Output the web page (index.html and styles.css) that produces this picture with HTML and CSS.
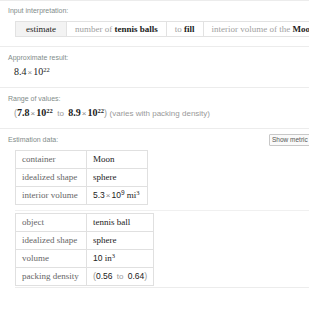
FILE: index.html
```html
<!DOCTYPE html>
<html lang="en">
<head>
  <meta charset="UTF-8" />
  <title>Estimate - tennis balls to fill the Moon</title>
  <link rel="stylesheet" href="styles.css">
</head>
<body>

<div class="pod pod-input">
  <div class="pod-title">Input interpretation:</div>
  <div class="interp">
    <span class="cell cell-head">estimate</span>
    <span class="cell">number of <b>tennis balls</b></span>
    <span class="cell">to <b>fill</b></span>
    <span class="cell">interior volume of the <b>Moon</b></span>
  </div>
</div>

<div class="pod pod-result">
  <div class="pod-title">Approximate result:</div>
  <div class="value">8.4<span class="times">&times;</span>10<sup>22</sup></div>
</div>

<div class="pod pod-range">
  <div class="pod-title">Range of values:</div>
  <div class="value">
    <span class="paren">(</span><b>7.8</b><span class="times">&times;</span><b>10<sup>22</sup></b>
    <span class="word">to</span>
    <b>8.9</b><span class="times">&times;</span><b>10<sup>22</sup></b><span class="paren">)</span>
    <span class="note">(varies with packing density)</span>
  </div>
</div>

<div class="pod pod-data">
  <div class="title-row">
    <div class="pod-title">Estimation data:</div>
    <button class="metric">Show metric</button>
  </div>

  <div class="subpod">
    <table class="data data-moon">
      <tr><td>container</td><td>Moon</td></tr>
      <tr><td>idealized shape</td><td>sphere</td></tr>
      <tr><td>interior volume</td><td><span class="num">5.3</span><span class="times">&times;</span><span class="num">10<sup>9</sup></span> mi<sup>3</sup></td></tr>
    </table>
  </div>

  <div class="subpod subpod-last">
    <table class="data data-ball">
      <tr><td>object</td><td>tennis ball</td></tr>
      <tr><td>idealized shape</td><td>sphere</td></tr>
      <tr><td>volume</td><td><span class="num">10</span> in<sup>3</sup></td></tr>
      <tr><td>packing density</td><td><span class="paren">(</span><span class="num">0.56</span> <span class="word">to</span> <span class="num">0.64</span><span class="paren">)</span></td></tr>
    </table>
  </div>
</div>

</body>
</html>
```

FILE: styles.css
```css
body {
  margin: 0;
  background: #fff;
  color: #222;
  font-family: 'Liberation Serif', 'DejaVu Serif', serif;
  width: 309px;
  height: 309px;
  overflow: hidden;
}

.pod {
  border-top: 1px solid #ececec;
  padding: 5px 0 0 8px;
}

.pod-title {
  font-family: 'Liberation Sans', Arial, sans-serif;
  font-size: 7px;
  line-height: 9px;
  color: #7f8c8a;
}

/* input interpretation */
.pod-input {
  height: 40px;
  overflow: hidden;
}

.interp {
  display: flex;
  margin: 6px 0 0 7px;
  white-space: nowrap;
  border-top: 1px solid #e2e2e2;
  border-bottom: 1px solid #e2e2e2;
  height: 14px;
  width: 330px;
}

.cell {
  font-size: 9px;
  line-height: 14px;
  padding: 0 8px;
  color: #a0a0a0;
  border-left: 1px solid #e2e2e2;
}

.cell b {
  color: #222;
}

.cell-head {
  background: #f3f3f3;
  color: #222;
  padding: 0 10px;
}

/* results */
.pod-result {
  height: 34px;
  padding-top: 6px;
}

.pod-range {
  height: 34px;
  padding-top: 6px;
}

.value {
  margin: 4px 0 0 6px;
  font-size: 10px;
  line-height: 12px;
  white-space: nowrap;
}

.value sup,
.data sup {
  font-size: 6.5px;
  line-height: 0;
  vertical-align: 3px;
}

.times {
  color: #888;
  font-family: 'Liberation Sans', Arial, sans-serif;
  font-size: 8px;
  margin: 0 1px;
}

.paren {
  color: #999;
  font-family: 'Liberation Sans', Arial, sans-serif;
  font-size: 9px;
}

.word {
  color: #999;
  font-family: 'Liberation Sans', Arial, sans-serif;
  font-size: 8px;
  margin: 0 2px;
}

.note {
  color: #999;
  font-family: 'Liberation Sans', Arial, sans-serif;
  font-size: 8px;
}

/* estimation data */
.pod-data {
  padding-top: 6px;
}

.title-row {
  display: flex;
  justify-content: space-between;
  align-items: flex-start;
}

.metric {
  font-family: 'Liberation Sans', Arial, sans-serif;
  font-size: 6.5px;
  color: #555;
  background: #fafafa;
  border: 1px solid #c8c8c8;
  border-radius: 1px;
  padding: 1px 2px;
  line-height: 8px;
  margin: -1px -14px 0 0;
  width: 54px;
  text-align: left;
}

.subpod {
  margin: 4px 0 0 7px;
}

.subpod-last {
  margin-top: 5px;
  border-top: 1px solid #f0f0f0;
  border-bottom: 1px solid #ececec;
  padding: 2px 0 1px;
}

.data {
  border-collapse: collapse;
  background: #fff;
}

.data td {
  border: 1px solid #e0e0e0;
  font-size: 9px;
  line-height: 17px;
  padding: 0 6px;
  white-space: nowrap;
  color: #222;
}

.data td:first-child {
  color: #666;
  width: 58px;
}

.data-moon td:last-child {
  width: 48px;
}

.data-ball td:last-child {
  width: 53px;
}

.num {
  font-family: 'Liberation Sans', Arial, sans-serif;
  font-size: 8.5px;
}
```
